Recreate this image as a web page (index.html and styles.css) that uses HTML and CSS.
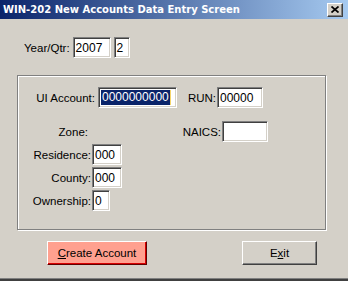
FILE: index.html
```html
<!DOCTYPE html>
<html lang="en">
<head>
  <meta charset="UTF-8">
  <meta name="viewport" content="width=device-width, initial-scale=1.0">
  <title>WIN-202 New Accounts Data Entry Screen</title>
  <link rel="stylesheet" href="styles.css">
</head>
<body>

  <div class="window">
    <div class="titlebar">
      <span class="title">WIN-202 New Accounts Data Entry Screen</span>
      <span class="close">
        <svg width="8" height="7" viewBox="0 0 8 7">
          <path d="M0.5 0.5l7 6M7.5 0.5l-7 6" stroke="#000" stroke-width="1.7" fill="none"/>
        </svg>
      </span>
    </div>

    <div class="content">
      <div class="row year-row">
        <span class="lbl">Year/Qtr:</span>
        <span class="field w-year">2007</span>
        <span class="field w-qtr">2</span>
      </div>

      <div class="group">
        <div class="row r-acct">
          <span class="lbl lbl-acct">UI Account:</span>
          <span class="field w-acct"><span class="sel">0000000000</span><span class="caret"></span></span>
          <span class="lbl lbl-run">RUN:</span>
          <span class="field w-run">00000</span>
        </div>
        <div class="row r-zone">
          <span class="lbl lbl-zone">Zone:</span>
          <span class="lbl lbl-naics">NAICS:</span>
          <span class="field w-naics"></span>
        </div>
        <div class="row r-small">
          <span class="lbl lbl-left">Residence:</span>
          <span class="field w-3">000</span>
        </div>
        <div class="row r-small">
          <span class="lbl lbl-left">County:</span>
          <span class="field w-3">000</span>
        </div>
        <div class="row r-small">
          <span class="lbl lbl-left">Ownership:</span>
          <span class="field w-1">0</span>
        </div>
      </div>

      <div class="buttons">
        <button class="btn btn-create"><u>C</u>reate Account</button>
        <button class="btn btn-exit">E<u>x</u>it</button>
      </div>
    </div>
  </div>

</body>
</html>
```

FILE: styles.css
```css
* {
  box-sizing: border-box;
}

body {
  margin: 0;
  font-family: "Liberation Sans", Arial, sans-serif;
  font-size: 11px;
  color: #000;
  background: #d4d0c8;
}

.window {
  width: 348px;
  height: 281px;
  background: #d4d0c8;
  display: flex;
  flex-direction: column;
  border-bottom: 2px solid #404040;
}

.titlebar {
  height: 19px;
  flex: none;
  display: flex;
  align-items: center;
  justify-content: space-between;
  padding: 0 5px 0 3px;
  background: linear-gradient(to right, #0a246a, #a6caf0);
}

.title {
  color: #fff;
  font-family: "DejaVu Sans", sans-serif;
  font-weight: bold;
  font-size: 10px;
}

.close {
  width: 16px;
  height: 14px;
  background: #d4d0c8;
  border-top: 1px solid #fff;
  border-left: 1px solid #fff;
  border-right: 1px solid #404040;
  border-bottom: 1px solid #404040;
  box-shadow: inset -1px -1px #808080;
  display: flex;
  align-items: center;
  justify-content: center;
}

.content {
  flex: 1;
  border-bottom: 1px solid #808080;
}

.row {
  display: flex;
  align-items: center;
  height: 21px;
}

.lbl {
  white-space: nowrap;
  font-size: 11.5px;
}

.year-row {
  margin-top: 18px;
  padding-left: 24px;
  gap: 3px;
}

.field {
  height: 21px;
  background: #fff;
  border-top: 1px solid #808080;
  border-left: 1px solid #808080;
  border-bottom: 1px solid #fff;
  border-right: 1px solid #fff;
  box-shadow: inset 1px 1px #404040, inset -1px -1px #d4d0c8;
  padding: 0 2px;
  display: flex;
  align-items: center;
  font-family: "Liberation Sans", Arial, sans-serif;
  font-size: 12px;
}

.w-year { width: 38px; }
.w-qtr { width: 16px; }
.w-acct { width: 79px; }
.w-run { width: 46px; }
.w-naics { width: 46px; }
.w-3 { width: 30px; }
.w-1 { width: 18px; }

.sel {
  background: #0a246a;
  color: #fff;
  height: 15px;
  line-height: 15px;
  padding: 0 1px;
}

.caret {
  width: 1px;
  height: 15px;
  background: #f5d56a;
}

.group {
  margin: 17px 0 0 17px;
  width: 309px;
  height: 155px;
  border: 1px solid #808080;
  box-shadow: 1px 1px 0 #fff, inset 1px 1px 0 #fff;
  padding-top: 11px;
}

.lbl-acct {
  width: 77px;
  text-align: right;
  margin-right: 3px;
}

.lbl-run {
  width: 39px;
  text-align: right;
  margin-right: 1px;
}

.r-zone {
  margin-top: 13px;
}

.lbl-zone {
  width: 70px;
  text-align: right;
}

.lbl-naics {
  width: 133px;
  text-align: right;
  margin-right: 1px;
}

.r-small {
  margin-top: 2px;
}

.lbl-left {
  width: 73px;
  text-align: right;
  margin-right: 1px;
}

.buttons {
  display: flex;
  margin-top: 11px;
  padding-left: 47px;
}

.btn {
  height: 24px;
  font-family: "Liberation Sans", Arial, sans-serif;
  font-size: 11.5px;
  color: #000;
  background: #d4d0c8;
  border-top: 1px solid #fff;
  border-left: 1px solid #fff;
  border-right: 1px solid #404040;
  border-bottom: 1px solid #404040;
  box-shadow: inset -1px -1px #808080;
  padding: 0;
}

.btn-create {
  width: 100px;
  background: #ffa08f;
  border-right-color: #600000;
  border-bottom-color: #600000;
  box-shadow: inset -1px -1px #d80000;
}

.btn-exit {
  width: 75px;
  margin-left: 95px;
}
```
